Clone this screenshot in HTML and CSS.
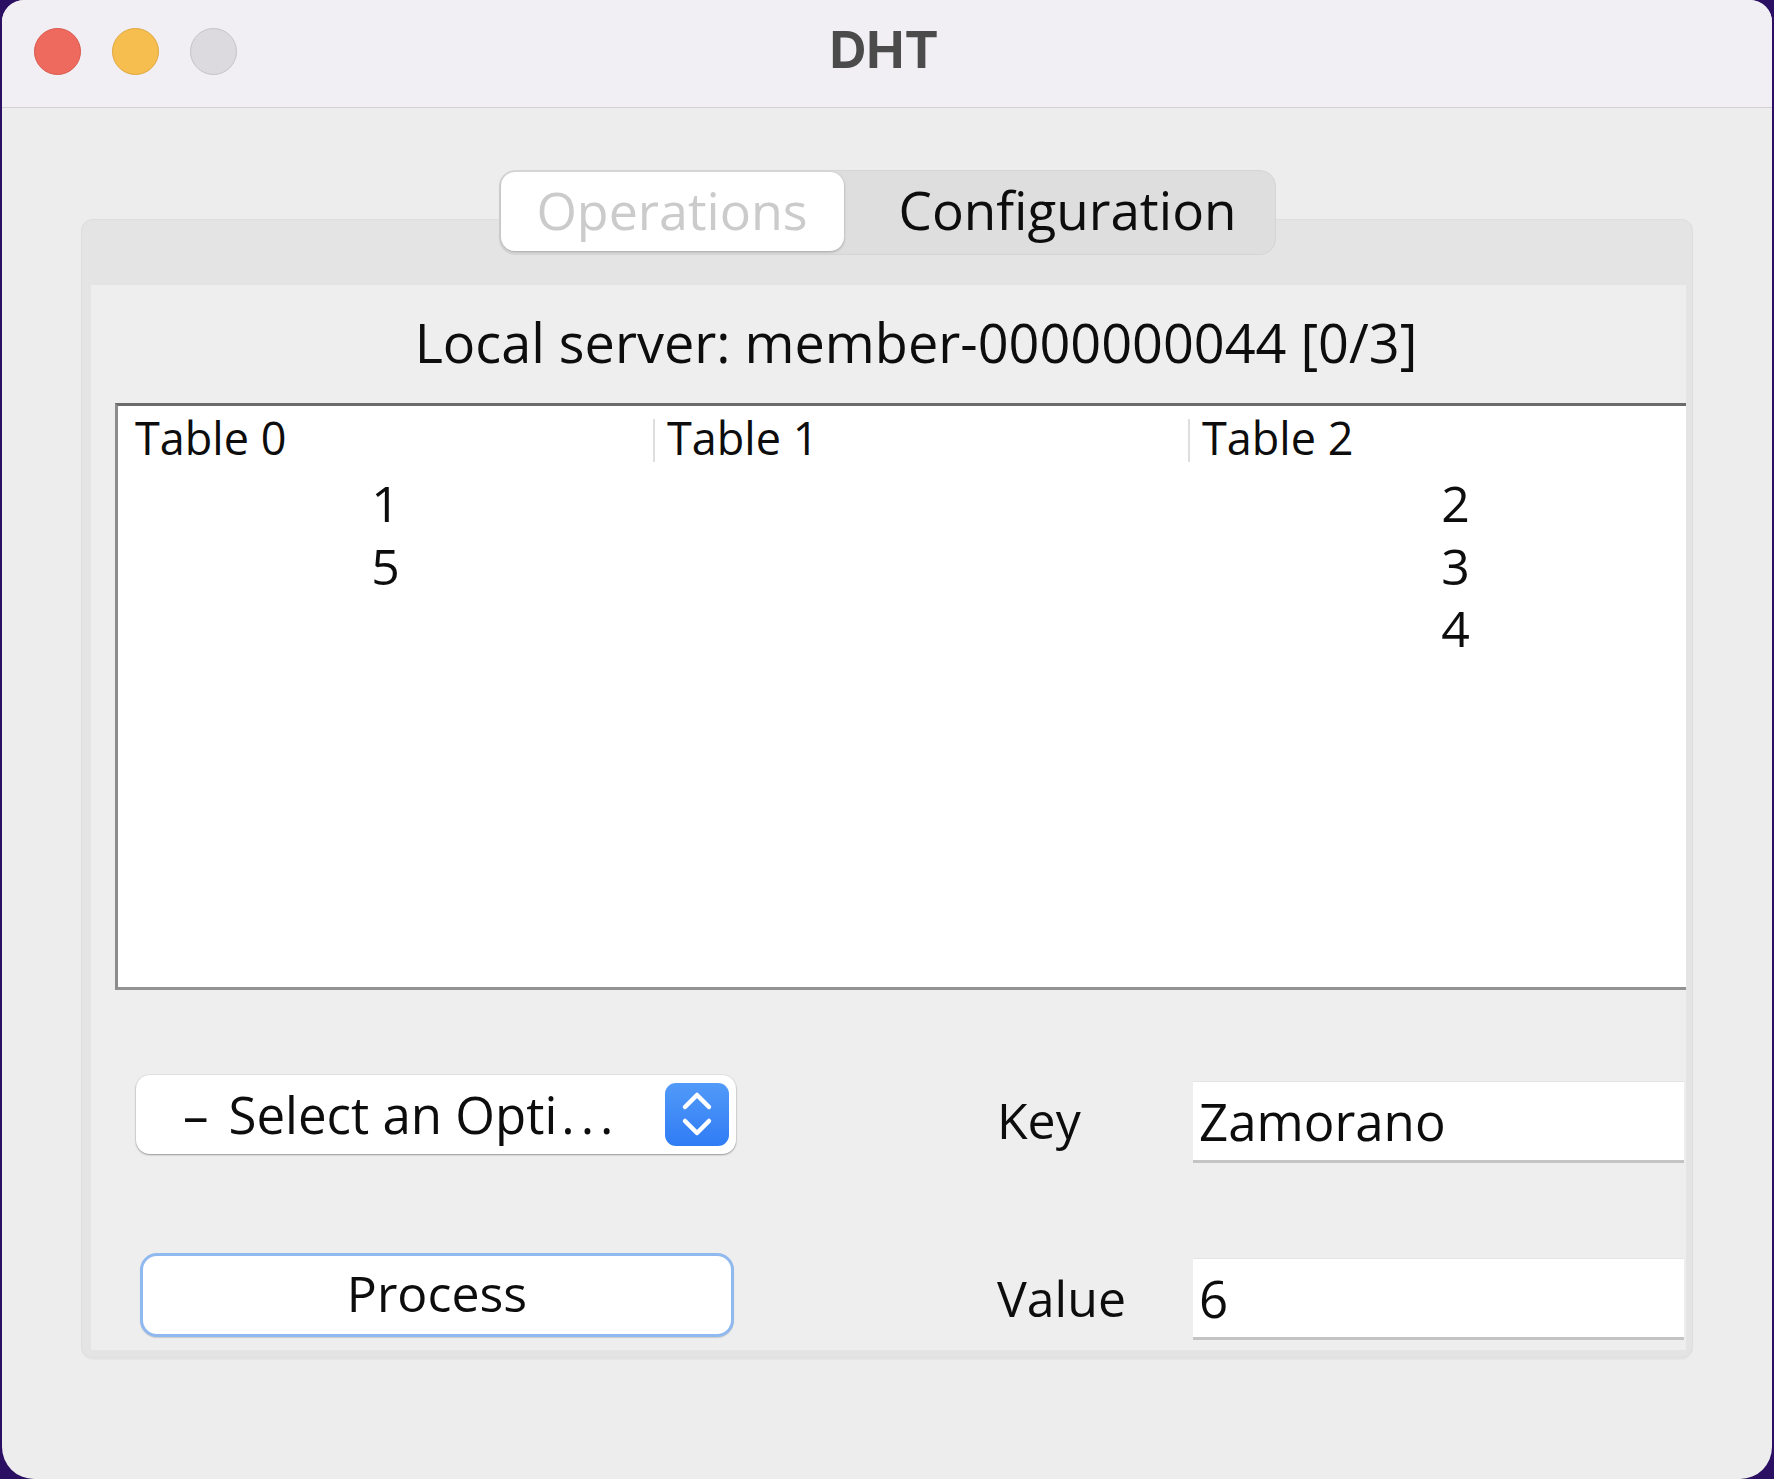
FILE: index.html
```html
<!DOCTYPE html>
<html>
<head>
<meta charset="utf-8">
<title>DHT</title>
<link rel="stylesheet" href="styles.css">
</head>
<body>
<div class="window">
  <header class="titlebar">
    <div class="lights">
      <span class="light red"></span>
      <span class="light yellow"></span>
      <span class="light gray"></span>
    </div>
    <div class="title">DHT</div>
    <div class="spacer"></div>
  </header>
  <main class="body">
    <div class="tabs">
      <div class="tab active">Operations</div>
      <div class="tab config">Configuration</div>
    </div>
    <section class="panel">
      <div class="pane">
        <div class="pane-inner">
          <h1 class="server">Local server: member-0000000044 [0/3]</h1>
          <div class="table">
            <div class="thead">
              <div class="th">Table 0</div>
              <div class="th sep">Table 1</div>
              <div class="th sep">Table 2</div>
            </div>
            <div class="tr"><div class="td">1</div><div class="td"></div><div class="td">2</div></div>
            <div class="tr"><div class="td">5</div><div class="td"></div><div class="td">3</div></div>
            <div class="tr"><div class="td"></div><div class="td"></div><div class="td">4</div></div>
          </div>
          <div class="form">
            <div class="combo">
              <span class="combo-text"><span class="dash">–</span>Select an Opti<span class="dots">...</span></span>
              <span class="combo-btn">
                <svg width="64" height="63" viewBox="0 0 64 63">
                  <path d="M20 24 L32 12 L44 24" fill="none" stroke="#fff" stroke-width="4.5" stroke-linecap="round" stroke-linejoin="round"/>
                  <path d="M20 38 L32 50 L44 38" fill="none" stroke="#fff" stroke-width="4.5" stroke-linecap="round" stroke-linejoin="round"/>
                </svg>
              </span>
            </div>
            <div class="label">Key</div>
            <div class="field key">Zamorano</div>
            <button class="process">Process</button>
            <div class="label">Value</div>
            <div class="field value">6</div>
          </div>
        </div>
      </div>
    </section>
  </main>
</div>
</body>
</html>
```

FILE: styles.css
```css
html, body {
  margin: 0;
  padding: 0;
}

body {
  background: #2a0f62;
  font-family: "Open Sans", "DejaVu Sans", sans-serif;
  font-weight: 500;
  color: #0d0d0d;
}

.window {
  margin-left: 2px;
  width: 1770px;
  height: 1479px;
  background: #ededed;
  border-radius: 22px 22px 32px 32px;
  overflow: hidden;
}

.titlebar {
  height: 107px;
  border-bottom: 1px solid #d2d0d5;
  background: #f1eff4;
  display: grid;
  grid-template-columns: 1fr auto 1fr;
}

.lights {
  display: flex;
  gap: 31px;
  padding: 28px 0 0 32px;
  align-items: flex-start;
}

.light {
  width: 47px;
  height: 47px;
  border-radius: 50%;
  box-sizing: border-box;
}

.red {
  background: #ee6a5e;
  border: 1px solid #da584d;
}

.yellow {
  background: #f6be4f;
  border: 1px solid #dfa73d;
}

.gray {
  background: #dcdadf;
  border: 1px solid #c5c3c8;
}

.title {
  font-family: Inter, "Open Sans", sans-serif;
  font-weight: 700;
  font-size: 51px;
  line-height: 99px;
  color: #4b4b4b;
  margin-right: 6px;
}

.body {
  padding-top: 62px;
}

.tabs {
  position: relative;
  z-index: 1;
  width: 777px;
  height: 85px;
  margin: 0 auto;
  box-sizing: border-box;
  border: 1px solid #d5d5d5;
  border-radius: 16px;
  background: #dedede;
  display: flex;
  align-items: flex-start;
  padding: 1px;
}

.tab {
  height: 79px;
  font-size: 53px;
  line-height: 75px;
  white-space: nowrap;
}

.tab.active {
  width: 343px;
  background: #fff;
  border-radius: 14px;
  box-shadow: 0 1px 3px rgba(0, 0, 0, 0.28);
  color: #cbcbcb;
  text-align: center;
  font-size: 52px;
  text-shadow: 0 1px 0 rgba(255, 255, 255, 0.9);
}

.tab.config {
  padding-left: 55px;
  color: #0d0d0d;
}

.panel {
  margin: -36px 79px 0;
  height: 1139px;
  box-sizing: border-box;
  background: #e4e4e4;
  border-radius: 12px;
  box-shadow: inset 0 0 0 1px #dedede, 0 2px 1px rgba(0, 0, 0, 0.03);
  padding: 66px 7px 8px 10px;
}

.pane {
  height: 100%;
  background: #eeeeee;
  overflow: hidden;
}

.pane-inner {
  width: 1650px;
}

.server {
  margin: 25px 0 0;
  font-size: 54px;
  font-weight: 500;
  line-height: 64px;
  text-align: center;
  white-space: nowrap;
}

.table {
  margin: 29px 0 0 24px;
  width: 1608px;
  height: 587px;
  box-sizing: border-box;
  border-top: 3px solid #6b6b6b;
  border-left: 3px solid #8c8c8c;
  border-bottom: 3px solid #929292;
  background: #fff;
}

.thead {
  display: grid;
  grid-template-columns: repeat(3, 535px);
  height: 66px;
}

.th {
  margin-top: 13px;
  height: 43px;
  box-sizing: border-box;
  line-height: 37px;
  font-size: 45px;
  padding-left: 17px;
  white-space: nowrap;
}

.th.sep {
  border-left: 2px solid #dedede;
  padding-left: 12px;
}

.tr {
  display: grid;
  grid-template-columns: repeat(3, 535px);
  height: 62.5px;
  line-height: 62.5px;
  font-size: 50px;
  text-align: center;
}

.form {
  display: grid;
  grid-template-columns: 603px 456px 491px;
  grid-template-rows: 86px 84px;
  row-gap: 92px;
  margin: 85px 0 0 43px;
  align-items: start;
}

.combo {
  margin-left: 2px;
  width: 600px;
  height: 79px;
  box-sizing: border-box;
  background: #fff;
  border-radius: 14px;
  box-shadow: 0 1px 2px rgba(0, 0, 0, 0.35), 0 0 0 1px rgba(0, 0, 0, 0.04);
  display: flex;
  align-items: center;
}

.combo-text {
  padding-left: 47px;
  font-size: 51px;
  line-height: 79px;
  white-space: nowrap;
}

.dash {
  margin-right: 20px;
}

.dots {
  margin-left: 4px;
  letter-spacing: 6px;
}

.combo-btn {
  margin-left: auto;
  margin-right: 7px;
  width: 64px;
  height: 63px;
  border-radius: 11px;
  background: linear-gradient(#529af8, #2f7cf5);
  display: flex;
}

.label {
  padding-left: 260px;
  font-size: 50px;
  line-height: 90px;
}

.field {
  height: 82px;
  box-sizing: border-box;
  background: #fff;
  border-top: 1px solid #e4e4e4;
  border-bottom: 3px solid #c4c4c4;
  padding-left: 6px;
  font-size: 51px;
  line-height: 78px;
}

.field.key {
  margin-top: 6px;
}

.field.value {
  margin-top: 5px;
}

.process {
  margin-left: 6px;
  width: 594px;
  height: 84px;
  box-sizing: border-box;
  border: 3px solid #8fb9ef;
  border-radius: 17px;
  background: #fff;
  padding: 0 0 4px;
  font-family: "Open Sans", "DejaVu Sans", sans-serif;
  font-weight: 500;
  font-size: 50px;
  line-height: 74px;
  color: #0d0d0d;
  box-shadow: 0 1px 1px rgba(0, 0, 0, 0.15);
}
```
